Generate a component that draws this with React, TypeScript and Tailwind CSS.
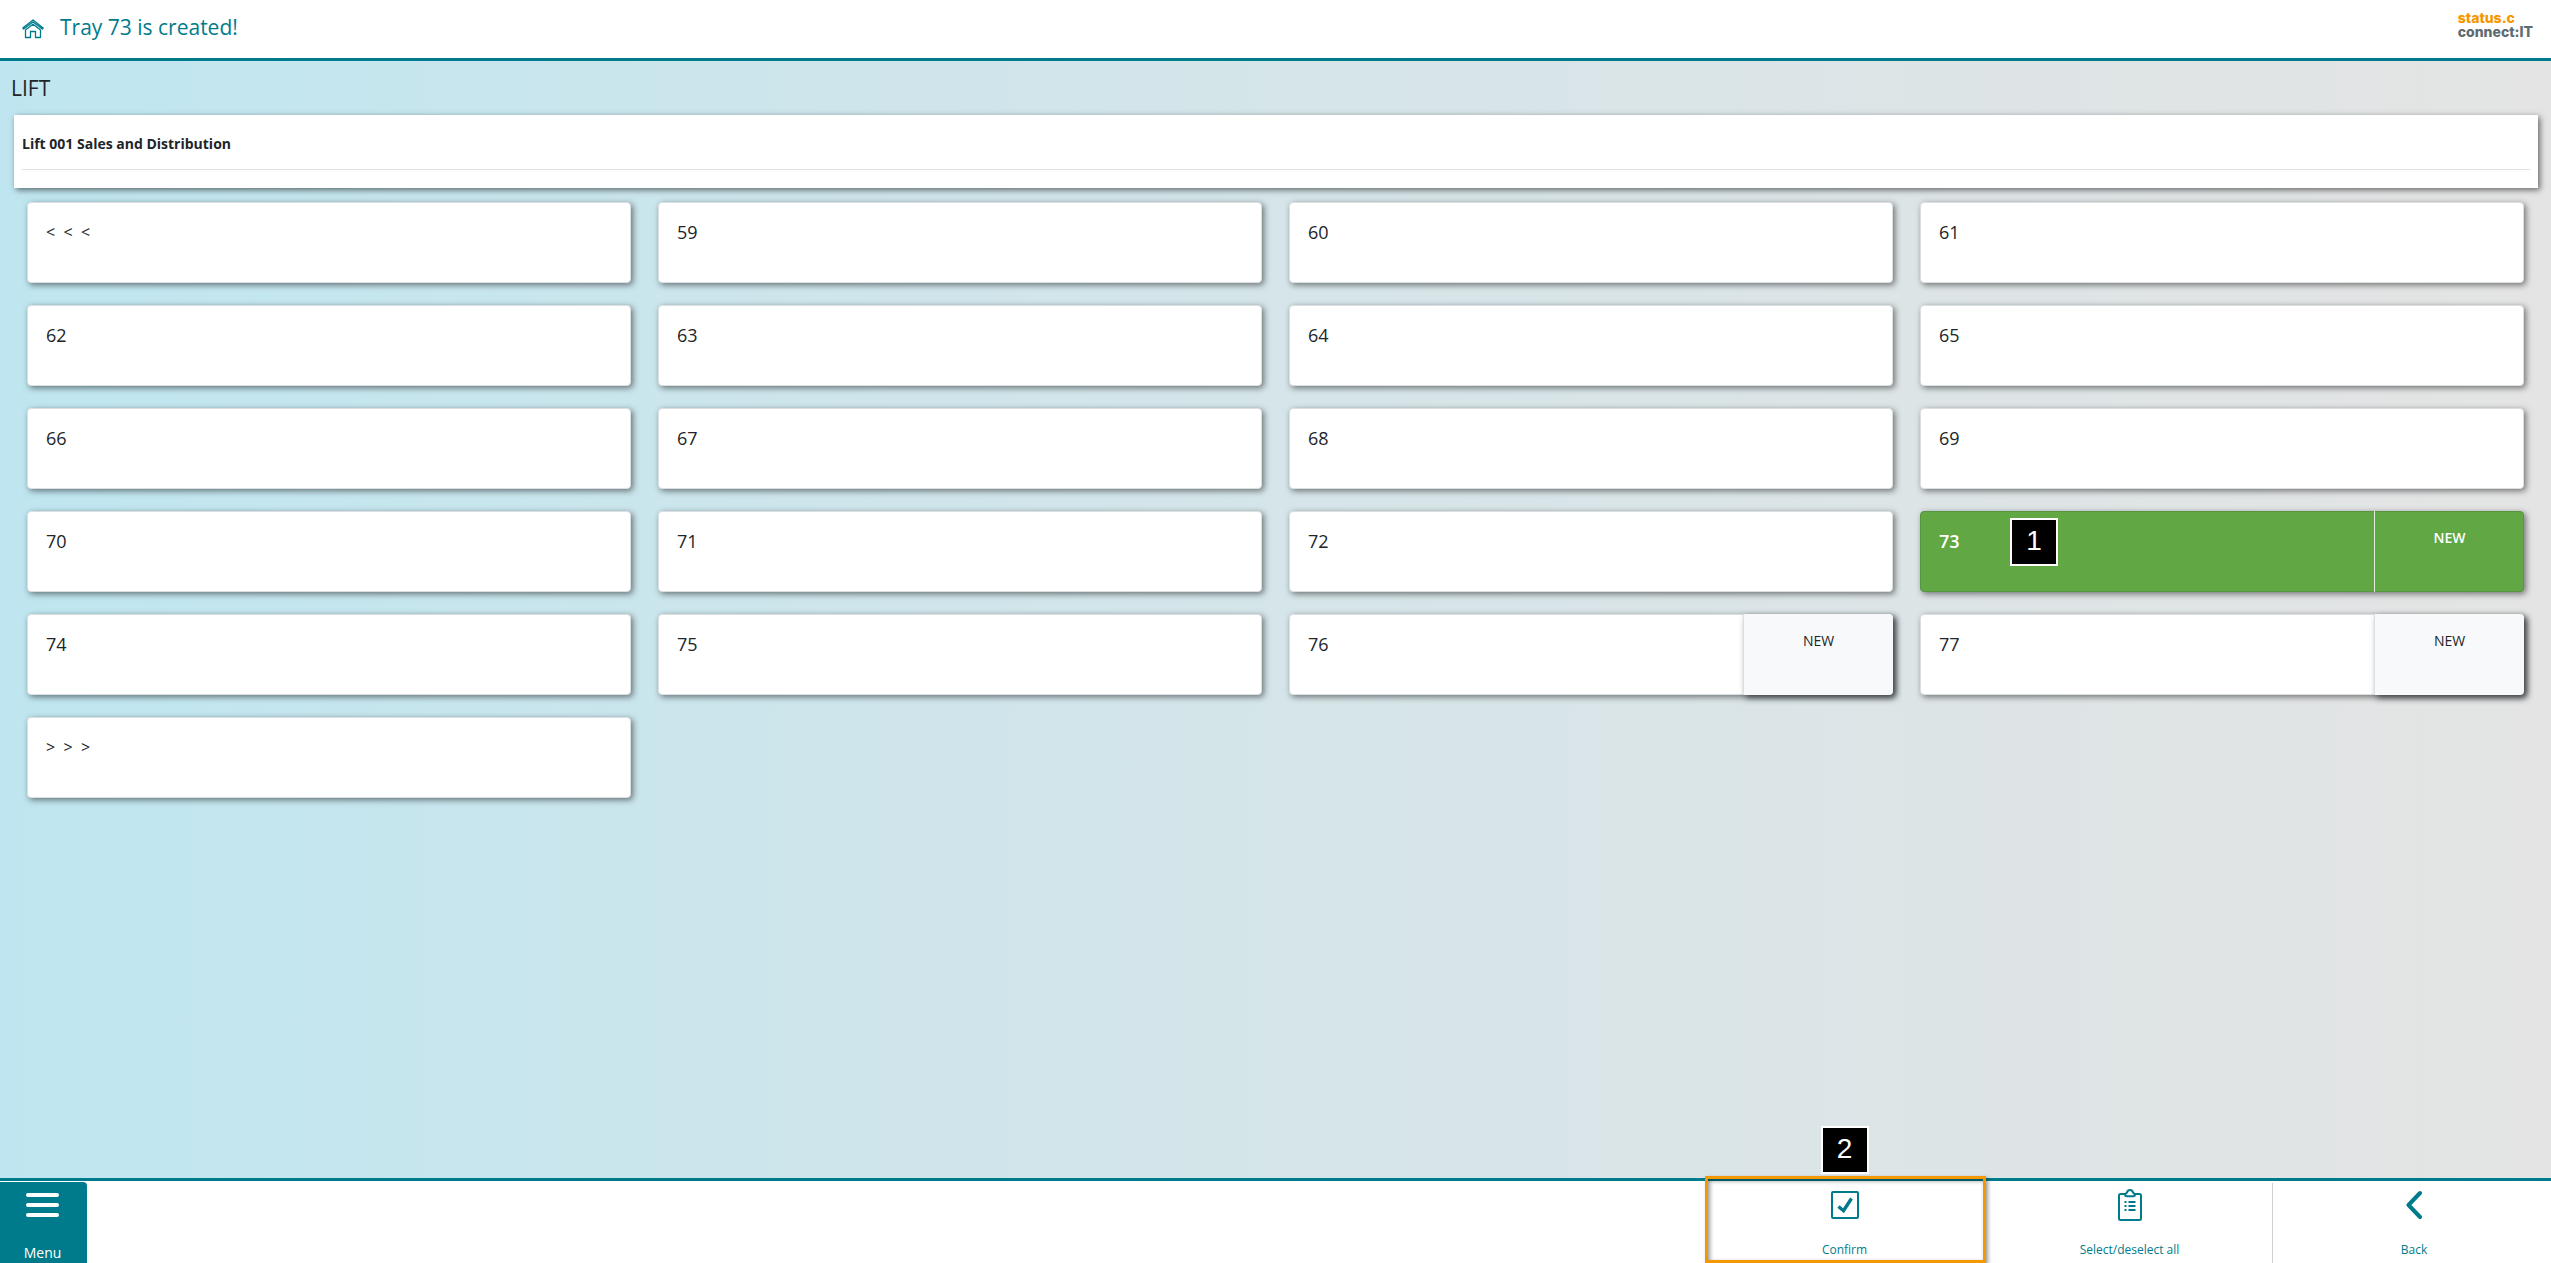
import { clsx } from "clsx"

type Tray = { label: string; fresh?: boolean; selected?: boolean; step?: number }

const trays: Tray[] = [
  { label: "<  <  <" },
  { label: "59" },
  { label: "60" },
  { label: "61" },
  { label: "62" },
  { label: "63" },
  { label: "64" },
  { label: "65" },
  { label: "66" },
  { label: "67" },
  { label: "68" },
  { label: "69" },
  { label: "70" },
  { label: "71" },
  { label: "72" },
  { label: "73", fresh: true, selected: true, step: 1 },
  { label: "74" },
  { label: "75" },
  { label: "76", fresh: true },
  { label: "77", fresh: true },
  { label: ">  >  >" },
]

function StepBadge({ value, className }: { value: number; className: string }) {
  return (
    <span
      className={clsx(
        "absolute flex size-12 justify-center border-2 border-white bg-black pt-[3px] font-['Liberation_Sans'] text-[28px] leading-9 font-normal text-white",
        className,
      )}
    >
      {value}
    </span>
  )
}

function HomeIcon() {
  return (
    <svg width="22" height="20" viewBox="0 0 22 20" fill="none" stroke="currentColor" strokeWidth="1.300" strokeLinejoin="round" strokeLinecap="round" aria-hidden="true">
      <path d="M.8 9 11 .9 21.200 9l-.9 1L11 3 1.700 10z" />
      <path d="M3.500 11v7.500h5v-6h5v6h5V11L11 5.200z" />
    </svg>
  )
}

function CheckIcon() {
  return (
    <svg width="28" height="28" viewBox="0 0 28 28" fill="none" stroke="currentColor" aria-hidden="true">
      <rect x="1" y="1" width="26" height="26" rx="1" strokeWidth="2" />
      <path d="M7.500 15.500l5 4.200L20.500 7.500" strokeWidth="3.400" />
    </svg>
  )
}

function ClipboardIcon() {
  return (
    <svg width="24" height="34" viewBox="0 0 24 34" fill="none" stroke="currentColor" strokeWidth="2" aria-hidden="true">
      <path d="M7 6H2.500Q1 6 1 7.500v23Q1 32 2.500 32h19q1.500 0 1.500-1.500v-23Q23 6 21.500 6H17" />
      <path d="M9 4.500Q9.600 2 12 2t3 2.500l1.800 1.800q.6 1.900-1.800 1.900H9q-2.400 0-1.800-1.900z" />
      <path d="M6.500 14h2M10.500 14h7M6.500 18h2M10.500 18h7M6.500 22h2M10.500 22h7" />
    </svg>
  )
}

function BackIcon() {
  return (
    <svg width="16" height="30" viewBox="0 0 16 30" fill="none" stroke="currentColor" strokeWidth="4" strokeLinecap="round" strokeLinejoin="round" aria-hidden="true">
      <path d="M14 3 2.500 15 14 27" />
    </svg>
  )
}

function TrayCard({ tray }: { tray: Tray }) {
  return (
    <button
      type="button"
      aria-pressed={!!tray.selected}
      className={clsx(
        "relative flex h-[81px] rounded border text-left shadow-[2px_2px_6px_rgba(0,0,0,0.5)]",
        tray.selected ? "border-[#57963f] bg-[#61a744] font-semibold text-white" : "border-[#dcdfe1] bg-white font-medium text-[#212529]",
      )}
    >
      <span className={clsx("flex-1 px-[18px] pt-[15px] leading-7 whitespace-pre", /^\d/.test(tray.label) ? "text-lg" : "text-base")}>
        {tray.label}
      </span>
      {tray.fresh && (
        <span
          className={clsx(
            "-m-px flex w-[150px] justify-center rounded-r border-l pt-[15px] text-sm leading-6",
            tray.selected ? "border-white/80" : "border-[#dcdfe1] bg-[#f8f9fb] shadow-[3px_3px_6px_rgba(33,37,41,0.7)]",
          )}
        >
          NEW
        </span>
      )}
      {tray.step && <StepBadge value={tray.step} className="top-1.5 left-[89px]" />}
    </button>
  )
}

const actionClass = "relative flex w-[285px] flex-col items-center justify-between pb-1 text-xs leading-[18px]"

export default function App() {
  return (
    <div className="flex min-h-screen flex-col overflow-hidden bg-linear-to-r from-[#bfe6f0] via-[#d5e5e9] to-[#e4e4e4] font-['Open_Sans',sans-serif] text-[#212529]">
      <header className="flex h-[61px] items-center justify-between border-b-3 border-[#007b8b] bg-white pr-[18px] pl-[22px]">
        <div className="flex items-center gap-4 text-[#007b8b]">
          <a href="#home" aria-label="Home">
            <HomeIcon />
          </a>
          <h1 className="pb-1 text-[21px] leading-7 font-medium">Tray 73 is created!</h1>
        </div>
        <div className="pb-2 font-['Inter',sans-serif] text-sm leading-[14px] font-extrabold">
          <div className="text-[#f39800]">status.c</div>
          <div className="text-[#5f6b72]">connect:IT</div>
        </div>
      </header>

      <main className="flex-1">
        <h2 className="px-[11px] pt-3 pb-3 text-[21px] leading-[30px] font-medium">LIFT</h2>
        <section className="mr-[13px] ml-[14px] h-[73px] bg-white px-2 pt-[19px] shadow-[2px_2px_6px_rgba(0,0,0,0.55)]">
          <h3 className="pb-[15px] text-sm leading-5 font-bold">Lift 001 Sales and Distribution</h3>
          <hr className="border-[#dfe1e2]" />
        </section>
        <div className="grid grid-cols-4 gap-x-[27px] gap-y-[22px] px-[27px] pt-3.5">
          {trays.map((tray) => (
            <TrayCard key={tray.label} tray={tray} />
          ))}
        </div>
      </main>

      <footer className="flex h-[85px] justify-between border-t-3 border-[#007b8b] bg-white text-[#007b8b]">
        <button type="button" className="mt-px flex w-[87px] flex-col items-center justify-between rounded-tr bg-[#007b8b] pt-[11px] pr-0.5 text-sm leading-5 text-white">
          <span className="flex w-[33px] flex-col gap-1.5">
            <span className="h-1 rounded-full bg-white" />
            <span className="h-1 rounded-full bg-white" />
            <span className="h-1 rounded-full bg-white" />
          </span>
          Menu
        </button>
        <div className="-mr-1.5 flex">
          <button type="button" className={clsx(actionClass, "pt-2.5")}>
            {/* highlighted step */}
            <span className="absolute -top-[5px] right-px bottom-0 left-[3px] border-3 border-[#f39800] shadow-[2px_2px_4px_rgba(0,0,0,0.4),inset_2px_2px_4px_rgba(0,0,0,0.4)]" />
            <StepBadge value={2} className="-top-[55px]" />
            <CheckIcon />
            Confirm
          </button>
          <button type="button" className={clsx(actionClass, "pt-[7px]")}>
            <ClipboardIcon />
            Select/deselect all
          </button>
          <button type="button" className={clsx(actionClass, "mt-0.5 border-l border-[#d0d0d0] pt-[7px] pr-0.5")}>
            <BackIcon />
            Back
          </button>
        </div>
      </footer>
    </div>
  )
}
